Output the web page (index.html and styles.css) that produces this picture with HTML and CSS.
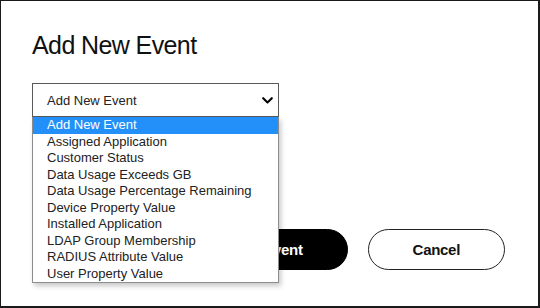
FILE: index.html
```html
<!DOCTYPE html>
<html lang="en">
<head>
<meta charset="utf-8">
<title>Add New Event</title>
<link rel="stylesheet" href="styles.css">
</head>
<body>
<div class="frame">
  <h1 class="title">Add New Event</h1>
  <div class="select-wrap">
    <div class="select">
      <span class="select-value">Add New Event</span>
      <svg class="chevron" width="11" height="7" viewBox="0 0 11 7" aria-hidden="true">
        <polyline points="1.2,1.2 5.5,5.4 9.8,1.2" fill="none" stroke="#000" stroke-width="2.1" stroke-linecap="round" stroke-linejoin="round"/>
      </svg>
    </div>
    <ul class="options">
      <li class="option selected">Add New Event</li>
      <li class="option">Assigned Application</li>
      <li class="option">Customer Status</li>
      <li class="option">Data Usage Exceeds GB</li>
      <li class="option">Data Usage Percentage Remaining</li>
      <li class="option">Device Property Value</li>
      <li class="option">Installed Application</li>
      <li class="option">LDAP Group Membership</li>
      <li class="option">RADIUS Attribute Value</li>
      <li class="option">User Property Value</li>
    </ul>
  </div>
  <div class="actions">
    <button class="btn btn-primary">Add Event</button>
    <button class="btn btn-secondary">Cancel</button>
  </div>
</div>
</body>
</html>
```
FILE: styles.css
```css
html, body {
  margin: 0;
  padding: 0;
  background: #fff;
}
.frame {
  box-sizing: border-box;
  width: 540px;
  height: 308px;
  border: 1px solid #1a1a1a;
  border-right-width: 2px;
  border-bottom-width: 2px;
  padding: 29px 0 0 31px;
  font-family: "Liberation Sans", Arial, sans-serif;
  color: #111;
  overflow: hidden;
}
.title {
  margin: 0;
  font-size: 25px;
  line-height: 30px;
  font-weight: normal;
  letter-spacing: -0.6px;
  color: #111;
}
.select-wrap {
  position: relative;
  width: 247px;
  margin-top: 23px;
}
.select {
  box-sizing: border-box;
  height: 34px;
  border: 1px solid #5a5a5a;
  display: flex;
  align-items: center;
  justify-content: space-between;
  padding: 0 5px 0 14px;
  font-size: 13px;
  color: #222;
}
.chevron {
  display: block;
}
.options {
  position: absolute;
  top: 100%;
  left: 0;
  right: 0;
  margin: 0;
  padding: 0;
  list-style: none;
  background: #fff;
  border: 1px solid #8c8c8c;
  border-top: 0;
  box-shadow: 2px 3px 5px rgba(0, 0, 0, 0.22);
  z-index: 2;
}
.option {
  height: 16.5px;
  line-height: 16.5px;
  padding-left: 14px;
  font-size: 13px;
  color: #222;
  white-space: nowrap;
}
.option.selected {
  background: #2290f8;
  color: #fff;
}
.actions {
  display: flex;
  justify-content: flex-end;
  gap: 20px;
  margin-top: 112px;
  padding-right: 33px;
}
.btn {
  box-sizing: border-box;
  height: 41px;
  border-radius: 21px;
  padding: 0 44px;
  font-family: "Liberation Sans", Arial, sans-serif;
  font-size: 15px;
  font-weight: bold;
  letter-spacing: -0.3px;
  cursor: pointer;
}
.btn-primary {
  background: #000;
  color: #fff;
  border: 1.5px solid #000;
}
.btn-secondary {
  background: #fff;
  color: #111;
  border: 1.5px solid #222;
}
```
